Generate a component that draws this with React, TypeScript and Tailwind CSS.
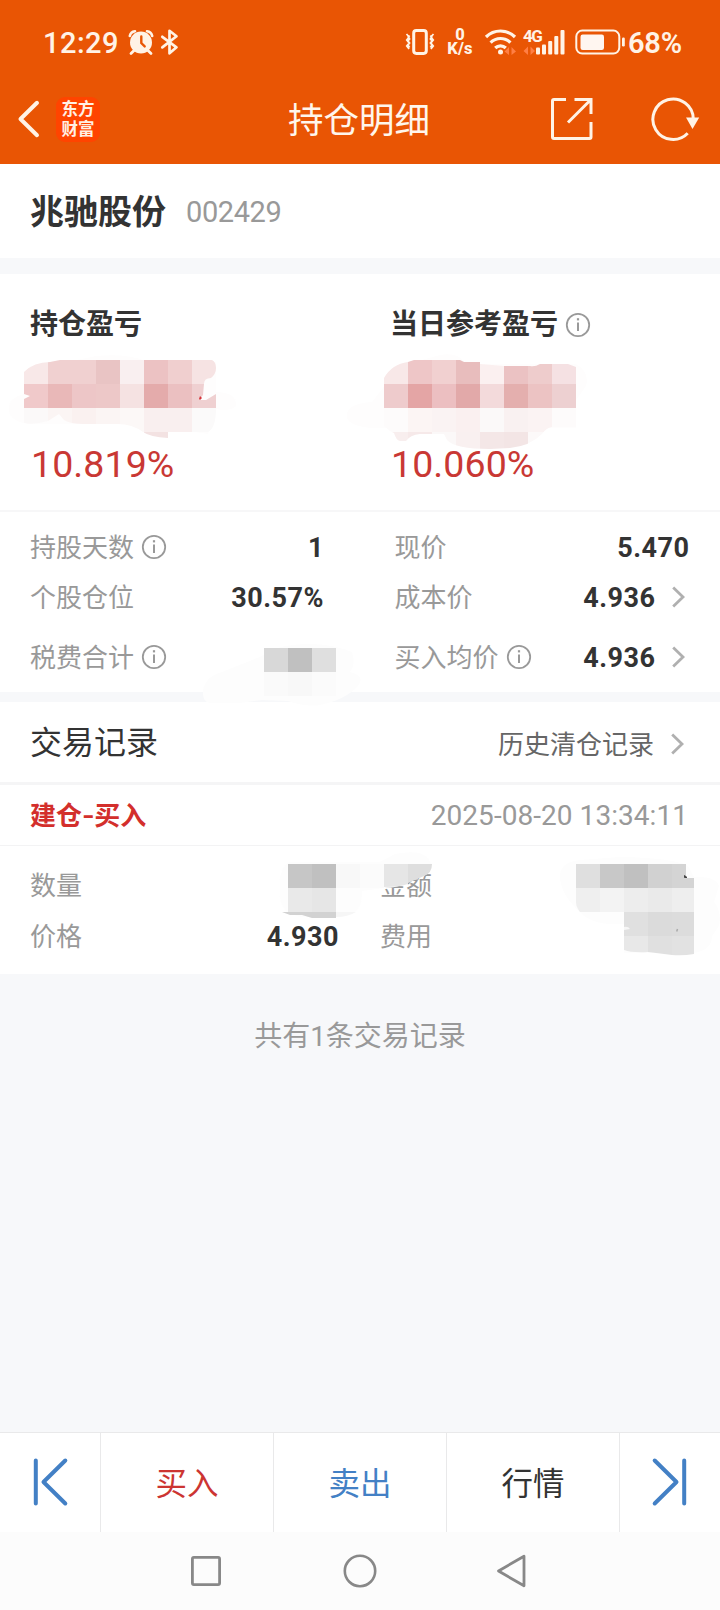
import React from "react";

const CREAM = "#fff3e6";

type Cell = [number, number, number, number, string];

function tiles(x: number, y: number, h: number, colors: string[]): Cell[] {
  return colors.map((c, i) => [x + i * 24, y, 24, h, c]);
}

function Cells({ cells }: { cells: Cell[] }) {
  return (
    <g shapeRendering="crispEdges">
      {cells.map(([x, y, w, h, c], i) => (
        <rect key={i} x={x} y={y} width={w} height={h} fill={c} />
      ))}
    </g>
  );
}

function Info() {
  return (
    <svg className="ml-[7px] block shrink-0" width="26" height="26" viewBox="0 0 26 26" fill="none" stroke="#999" strokeWidth="1.8">
      <circle cx="13" cy="13" r="11.2" />
      <path d="M13 10.4v8.6" strokeWidth="2" />
      <path d="M13 6.2v2.2" strokeWidth="2.2" />
    </svg>
  );
}

function Chevron() {
  return (
    <svg className="ml-4 block shrink-0" width="16" height="24" viewBox="0 0 16 24" fill="none" stroke="#b0b0b0" strokeWidth="2.8">
      <path d="M1.2 2.500 11 12 1.200 21.500" />
    </svg>
  );
}

function StatusBar() {
  return (
    <div className="flex h-[84px] items-center text-[#fff3e6]">
      <div className="mt-[2px] ml-[43px] w-[76px] text-[29px] leading-none font-medium tracking-[0.5px]">12:29</div>
      <svg className="ml-[8px]" width="28" height="28" viewBox="0 0 28 28" fill="none">
        <circle cx="14" cy="14.5" r="11" fill={CREAM} />
        <path d="M2.8 8A6 6 0 0 1 8 3.2M25.2 8A6 6 0 0 0 20 3.200" stroke={CREAM} strokeWidth="2.6" strokeLinecap="round" />
        <path d="m7 22.5-3 3M21 22.5l3 3" stroke={CREAM} strokeWidth="2.8" strokeLinecap="round" />
        <path d="M14.3 8.5v6.6l3.4 3.3" stroke="#e95504" strokeWidth="2.4" strokeLinecap="round" />
      </svg>
      <svg className="ml-[5px]" width="20" height="28" viewBox="0 0 20 28" fill="none" stroke={CREAM} strokeWidth="2.7" strokeLinejoin="round" strokeLinecap="round">
        <path d="m2.3 8.8 14.2 10.5-7 6V2.8l7 5.4L2.3 19.4" />
      </svg>
      <svg className="ml-[225px]" width="30" height="28" viewBox="0 0 30 28" fill="none" stroke={CREAM}>
        <rect x="8.7" y="2.6" width="12.6" height="22.8" rx="2.6" strokeWidth="3" />
        <path d="m1.500 6 2.600 3-2.400 3 2.400 3-2.400 3 2.400 3M4.600 7.500 3.200 9 4.600 11 3 13l1.600 2L3 17l1.600 2.500" strokeWidth="1.7" />
        <path d="m28.500 6-2.600 3 2.400 3-2.400 3 2.400 3-2.400 3M25.400 7.500 26.800 9l-1.400 2 1.600 2-1.600 2 1.600 2-1.600 2.500" strokeWidth="1.7" />
      </svg>
      <div className="ml-[11px] flex w-[28px] flex-col items-center font-['Roboto',sans-serif] text-[16.500px] leading-[14px] font-extrabold">
        <span className="h-[14px]">0</span>
        <span className="h-[14px] tracking-[0.200px]">K/s</span>
      </div>
      <svg className="ml-[10px]" width="34" height="28" viewBox="0 0 34 28" fill="none" stroke={CREAM} strokeWidth="3.2">
        <path d="M2 9a20.5 20.5 0 0 1 29 0M6.600 14.600a14 14 0 0 1 19.800 0M11.200 20a7.600 7.600 0 0 1 10.600 0" />
        <circle cx="16.5" cy="24" r="2.5" fill={CREAM} stroke="none" />
        <path d="M20.500 23.500 25 19v8zM27.500 19l4.500 4.500-4.500 3.500z" fill="#ff7f45" stroke="none" />
      </svg>
      <div className="relative ml-[5px] h-[28px] w-[43px]">
        <svg className="block" width="43" height="28" viewBox="0 0 43 28" fill={CREAM}>
          <rect x="13" y="19.5" width="4" height="7" rx="1" />
          <rect x="19" y="16.5" width="4" height="10" rx="1" />
          <rect x="25.200" y="13" width="4" height="13.500" rx="1" />
          <rect x="31.300" y="8" width="4" height="18.500" rx="1" />
          <rect x="37.500" y="2" width="4" height="24.500" rx="1" />
          <path d="M5 27v-8.500L.5 23zM7.500 27v-8.500l4.500 4.500z" fill="#ff7f45" />
        </svg>
        <span className="absolute top-[1px] left-0 font-['Roboto',sans-serif] text-[17px] leading-[14px] font-bold tracking-[-1.5px]">4G</span>
      </div>
      <svg className="ml-[8px]" width="52" height="28" viewBox="0 0 52 28" fill="none">
        <rect x="2.300" y="2.600" width="43" height="23" rx="6" stroke={CREAM} strokeWidth="2" />
        <rect x="6.500" y="6.500" width="23.500" height="15.500" rx="2.200" fill="#fff6f0" />
        <rect x="48" y="9.500" width="2.800" height="9" rx="1.200" fill={CREAM} />
      </svg>
      <div className="mt-[2px] ml-[2px] text-[29px] leading-none font-semibold tracking-[-0.2px]">68%</div>
    </div>
  );
}

function TitleBar() {
  return (
    <div className="relative flex h-[80px] items-start">
      <svg className="mt-[15px] ml-[13px]" width="30" height="40" viewBox="0 0 30 40" fill="none" stroke={CREAM} strokeWidth="4" strokeLinecap="round">
        <path d="M24 3.800 7.500 20 24 36.200" strokeLinejoin="round" />
      </svg>
      <div className="mt-[13px] ml-[13px] flex h-[45px] w-[44px] flex-col items-center justify-center rounded-[9px] bg-[#ff4400] text-[16.500px] leading-[19.500px] font-bold text-[#fff0e4]">
        <span>东方</span>
        <span>财富</span>
      </div>
      <h1 className="mt-[12px] ml-[188px] w-[150px] text-[35.500px] leading-[50px] font-normal text-[#fff6ec]">持仓明细</h1>
      <svg className="mt-[13px] ml-[111px]" width="44" height="44" viewBox="0 0 44 44" fill="none" stroke={CREAM} strokeWidth="3">
        <path d="M17 2.600H5a1.500 1.500 0 0 0-1.500 1.500v36A1.500 1.500 0 0 0 5 41.600h35.500a1.500 1.500 0 0 0 1.500-1.500V25M25.500 2.600H42V17M41.500 3 19 25.500" />
      </svg>
      <svg className="mt-[12px] ml-[57px]" width="50" height="46" viewBox="0 0 50 46" fill="none">
        <path d="M43.300 23A20.200 20.200 0 1 0 37.700 37.200" stroke={CREAM} strokeWidth="3" />
        <path d="M36 21.500h13.200l-6.700 11.500z" fill={CREAM} />
      </svg>
    </div>
  );
}

function Stat({ label, info, value, link }: { label: string; info?: boolean; value?: string; link?: boolean }) {
  return (
    <div className="flex h-full items-center">
      <span className="mt-[2px] text-[26px] leading-none text-[#999]">{label}</span>
      {info && <Info />}
      <span className="mt-[3px] ml-auto text-[27px] leading-none font-bold tracking-[0.500px] text-[#333]">{value}</span>
      {link && <span className="mr-[2px]"><Chevron /></span>}
    </div>
  );
}

function Summary() {
  return (
    <section className="relative h-[418px] bg-white">
      <div className="grid h-[238px] grid-cols-[360px_1fr] border-b-2 border-[#f7f7f8] pl-[30px]">
        <div>
          <h2 className="mt-[31px] text-[28px] leading-[40px] font-bold text-[#333]">持仓盈亏</h2>
          <div className="mt-[97px] ml-[1px] text-[37.500px] leading-[44px] tracking-[0.100px] text-[#c93834]">10.819%</div>
        </div>
        <div>
          <h2 className="mt-[31px] flex items-center text-[28px] leading-[40px] font-bold text-[#333]">
            当日参考盈亏
            <Info />
          </h2>
          <div className="mt-[97px] ml-[1px] text-[37.500px] leading-[44px] tracking-[0.100px] text-[#c93834]">10.060%</div>
        </div>
      </div>
      <div className="grid grid-cols-[294px_295px] grid-rows-[50px_50px_70px] gap-x-[70.500px] pt-[10px] pl-[30px]">
        <Stat label="持股天数" info value="1" />
        <Stat label="现价" value="5.470" />
        <Stat label="个股仓位" value="30.57%" />
        <Stat label="成本价" value="4.936" link />
        <Stat label="税费合计" info />
        <Stat label="买入均价" info value="4.936" link />
      </div>
      <svg className="absolute top-0 left-0 z-10 block" width="720" height="434" viewBox="0 274 720 434">
        <defs>
          <clipPath id="total">
            <path d="M24 372Q34 362 50 362L60 360H212Q216 362 216 368T211 378Q204 378 204 384L203 395 199 400H206L216 394V408Q216 428 208 432H192L168 432V438Q150 437 143 432 132 424 118 424H84Q70 424 64 420L59 414 48 421Q34 425 24 423V399L30 396 24 394Z" />
          </clipPath>
          <clipPath id="daily">
            <path d="M384 378Q392 364 408 362L414 360H460L464 362H480V364L504 366H530Q535 367 540 364H568L576 367V427H552Q546 428 542 434 530 446 510 448L490 449Q455 449 447 440L444 434H420Q410 435 406 441H400Q396 440 394 433L390 431 384 426Z" />
          </clipPath>
        </defs>
        <path d="M9 410Q8 398 24 394L30 366Q70 362 96 356 126 353 146 361L216 362V392Q237 392 236 406 230 412 216 409L208 434 144 424H30Q10 422 9 410Z" fill="#fefdfd" />
        <g clipPath="url(#total)">
          <Cells
            cells={[
              ...tiles(24, 360, 24, ["#f8e8e8", "#f0d0d0", "#f0d0d0", "#e9c4c4", "#f9eff0", "#ecc2c3", "#f0cfcf", "#f6e3e3"]),
              ...tiles(24, 384, 24, ["#f0c9ca", "#e9b8b8", "#edc6c7", "#edc8c8", "#f5e2e2", "#e4abab", "#ebc0c1", "#efd0d1"]),
              ...tiles(24, 408, 24, ["#fbf9f9", "#fbf5f4", "#faf1f0", "#fbf5f4", "#fcf8f7", "#f9efef", "#f9efef", "#fbfafa"]),
              ...tiles(144, 432, 8, ["#f3e2e2"]),
            ]}
          />
        </g>
        <path d="m200 396 2 2-2 2-1-1z" fill="#d5343a" />
        <path d="M347 418Q344 404 372 402L400 366 440 355Q456 352 464 361L480 364H576Q590 372 586 386L576 400V428H372Q350 426 347 418Z" fill="#fefdfd" />
        <g clipPath="url(#daily)">
          <Cells
            cells={[
              ...tiles(384, 360, 24, ["#f8e8e8", "#eec6c7", "#f1d0d0", "#e8bdbd", "#fbf0f0", "#ebc2c3", "#eecccc", "#f5e1e3"]),
              ...tiles(384, 384, 24, ["#eecbcc", "#e4a5a5", "#ecbfc1", "#e2a9a9", "#f3dadb", "#e4afae", "#ecc3c3", "#edd0d1"]),
              ...tiles(384, 408, 24, ["#fdfbfb", "#fcf5f4", "#faf3f3", "#faf0f0", "#fbf9f9", "#f9f1f1", "#fbf3f3", "#fdfbfb"]),
              ...tiles(384, 432, 18, ["#f8eeee", "#f6e9e9", "#fbf8f8", "#f9f0f0", "#f4e7e7", "#f3e5e5", "#fcf9f9"]),
            ]}
          />
        </g>
        <path d="M203 690Q206 676 222 672L262 656Q275 645 305 644 330 643 352 652 356 664 350 672 366 676 358 686 345 700 320 705 305 707 288 701L262 700 240 703H210Q202 702 203 690Z" fill="#fdfdfd" />
        <Cells
          cells={[...tiles(264, 648, 24, ["#d8d8d8", "#c0c0c0", "#dfdfdf"]), ...tiles(264, 672, 24, ["#fafafa", "#f8f8f8", "#fbfbfb"])]}
        />
      </svg>
    </section>
  );
}

function Records() {
  return (
    <section className="bg-white">
      <div className="flex h-[80px] items-center pr-[33px] pl-[30px]">
        <span className="mt-[2px] text-[32px] leading-none text-[#333]">交易记录</span>
        <span className="mt-[6px] ml-auto text-[26px] leading-none text-[#666]">历史清仓记录</span>
        <span className="mt-[4px] ml-[1px]"><Chevron /></span>
      </div>
      <div className="h-[3px] bg-[#f5f5f6]" />
      <div className="flex h-[61px] items-center justify-between border-b border-[#f3f3f4] pr-[32px] pl-[30px]">
        <span className="mt-[2px] flex text-[26px] leading-none font-bold text-[#d32f2c]">
          建仓<span className="inline-block origin-left scale-x-125 pr-[2px]">-</span>买入
        </span>
        <span className="mt-[2px] text-[28px] leading-none tracking-[0.050px] text-[#999]">2025-08-20 13:34:11</span>
      </div>
      <div className="relative h-[128px]">
        <div className="grid grid-cols-[309px_309px] grid-rows-[51px_52px] gap-x-[41px] pt-[13px] pl-[30px]">
          <Stat label="数量" />
          <Stat label="金额" />
          <Stat label="价格" value="4.930" />
          <Stat label="费用" />
        </div>
        <svg className="absolute top-0 left-0 block" width="720" height="128" viewBox="0 846 720 128">
          <path d="M280 890Q278 868 290 862H380L395 854Q425 848 430 862L432 864Q431 872 424 876L408 882Q398 888 384 888L362 891Q362 910 352 913L330 917H302Q278 914 280 890Z" fill="#fdfdfd" />
          <Cells
            cells={[
              ...tiles(288, 864, 24, ["#c6c6c6", "#c0c0c0", "#f8f8f8", "#fbfbfb"]),
              ...tiles(288, 888, 24, ["#e9e9e9", "#e6e6e6"]),
            ]}
          />
          <path d="M282 912H336V918H312L302 915H290Z" fill="#d2d2d2" />
          <path d="M336 912H356Q348 917 336 917Z" fill="#f6f6f6" />
          <path d="M384 864h24v20q-8 3-24 3z" fill="#e6e6e6" />
          <path d="M408 864h24q0 9-8 12l-16 7z" fill="#dedede" />
          <path d="M560 876Q560 862 580 860L620 857Q675 858 688 866L694 877Q716 876 719 886L714 902Q722 912 719 926L712 936Q712 950 694 953H624V924Q592 926 580 912 560 894 560 876Z" fill="#fdfdfd" />
          <Cells
            cells={[
              ...tiles(576, 864, 24, ["#dfdfdf", "#c8c8c8", "#c0c0c0", "#d1d1d1"]),
              [672, 864, 14, 14, "#d4d4d4"],
              [672, 878, 22, 10, "#d4d4d4"],
              ...tiles(600, 888, 24, ["#f3f3f3", "#ededed", "#eaeaea"]),
              [672, 888, 22, 24, "#eeeeee"],
              ...tiles(624, 912, 24, ["#e0e0e0", "#dbdbdb"]),
              [672, 912, 22, 24, "#dcdcdc"],
            ]}
          />
          <path d="M576 888h24v24h-20q-4-5-4-10z" fill="#efefef" />
          <path d="M624 936h24v16q-16 1-24-2z" fill="#e8e8e8" />
          <path d="M648 936h24v19l-24-3z" fill="#e0e0e0" />
          <path d="M672 936h22v18q-11 2-22 1z" fill="#e2e2e2" />
          <path d="M624 927q4-1 6 2l-6 1z" fill="#f6f6f6" />
          <path d="m684.500 875.500 2.500 2h-2.500z" fill="#444" stroke="#444" />
          <path d="m677.500 929-.8 2.500" stroke="#aaa" strokeWidth="1.500" />
        </svg>
      </div>
    </section>
  );
}

function BottomTabs() {
  return (
    <nav className="grid h-[100px] grid-cols-[101px_173px_173px_173px_100px] border-t border-[#e9e9ea] bg-white text-[31.500px] leading-none">
      <button className="flex items-center border-r border-[#e9e9ea] pb-[2px] pl-[31px]">
        <svg width="40" height="50" viewBox="0 0 40 50" fill="none" stroke="#4380c5" strokeWidth="4" strokeLinecap="round" strokeLinejoin="round">
          <path d="M4.800 3.500v43M34.300 3.500 12.500 25l21.800 21.500" />
        </svg>
      </button>
      <button className="flex items-center justify-center border-r border-[#e9e9ea] pt-[4px] text-[#cc3532]">买入</button>
      <button className="flex items-center justify-center border-r border-[#e9e9ea] pt-[4px] text-[#4380c5]">卖出</button>
      <button className="flex items-center justify-center border-r border-[#e9e9ea] pt-[4px] text-[#333]">行情</button>
      <button className="flex items-center pb-[2px] pl-[29px]">
        <svg width="40" height="50" viewBox="0 0 40 50" fill="none" stroke="#4380c5" strokeWidth="4" strokeLinecap="round" strokeLinejoin="round">
          <path d="M35.200 3.500v43M5.700 3.500 27.500 25 5.700 46.500" />
        </svg>
      </button>
    </nav>
  );
}

function SystemNav() {
  return (
    <div className="flex h-[78px] items-center bg-[#fcfcfc]">
      <svg className="ml-[188px]" width="36" height="36" viewBox="0 0 36 36" fill="none" stroke="#888" strokeWidth="2.800">
        <rect x="4.400" y="4.400" width="27.200" height="27.200" rx="1.500" />
      </svg>
      <svg className="ml-[118px]" width="36" height="36" viewBox="0 0 36 36" fill="none" stroke="#888" strokeWidth="2.600">
        <circle cx="18" cy="18" r="15.200" />
      </svg>
      <svg className="ml-[115px]" width="36" height="36" viewBox="0 0 36 36" fill="none" stroke="#888" strokeWidth="2.800" strokeLinejoin="round">
        <path d="M31 3.200v29.600L5.500 18z" />
      </svg>
    </div>
  );
}

export default function App() {
  return (
    <div className="flex h-[1610px] w-[720px] flex-col overflow-hidden bg-[#f7f8fa] font-['Roboto','Noto_Sans_CJK_SC',sans-serif]">
      <header className="h-[164px] shrink-0 bg-[#e95504]">
        <StatusBar />
        <TitleBar />
      </header>
      <div className="mb-4 flex h-[94px] shrink-0 items-center bg-white pl-[30px]">
        <span className="mt-[2px] text-[34px] leading-none font-bold text-[#333]">兆驰股份</span>
        <span className="mt-[3px] ml-[20px] text-[29px] leading-none tracking-[-0.400px] text-[#999]">002429</span>
      </div>
      <Summary />
      <div className="h-[10px] shrink-0" />
      <Records />
      <p className="mt-[43px] text-center text-[28px] leading-[40px] text-[#999]">共有1条交易记录</p>
      <div className="mt-auto">
        <BottomTabs />
        <SystemNav />
      </div>
    </div>
  );
}
